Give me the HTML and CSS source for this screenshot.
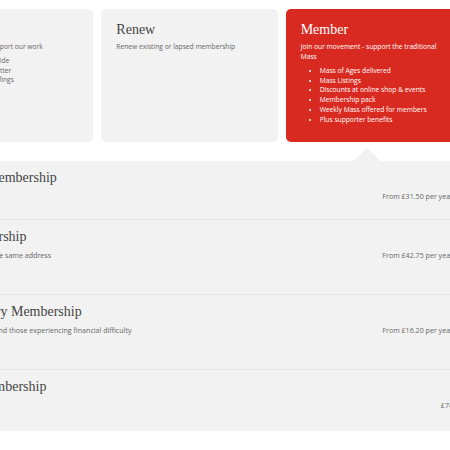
FILE: index.html
```html
<!DOCTYPE html>
<html lang="en">
<head>
<meta charset="utf-8">
<title>Membership</title>
<link rel="stylesheet" href="styles.css">
</head>
<body>
<div class="wrap">
  <div class="cards">
    <div class="card">
      <h2 class="card-title">Supporter</h2>
      <p class="card-desc">Keep informed — support our work</p>
      <ul class="card-list">
        <li>Mass listings guide</li>
        <li>Monthly newsletter</li>
        <li>Parliament briefings</li>
      </ul>
    </div>
    <div class="card">
      <h2 class="card-title">Renew</h2>
      <p class="card-desc">Renew existing or lapsed membership</p>
    </div>
    <div class="card card-active">
      <h2 class="card-title">Member</h2>
      <p class="card-desc">Join our movement - support the traditional Mass</p>
      <ul class="card-list">
        <li>Mass of Ages delivered</li>
        <li>Mass Listings</li>
        <li>Discounts at online shop &amp; events</li>
        <li>Membership pack</li>
        <li>Weekly Mass offered for members</li>
        <li>Plus supporter benefits</li>
      </ul>
      <span class="pointer"></span>
    </div>
  </div>
  <div class="panel">
    <div class="row">
      <div class="row-main">
        <h3 class="row-title">Individual Membership</h3>
      </div>
      <div class="row-price">From £31.50 per year</div>
    </div>
    <div class="row">
      <div class="row-main">
        <h3 class="row-title">Joint Membership</h3>
        <p class="row-desc">Two people living at the same address</p>
      </div>
      <div class="row-price">From £42.75 per year</div>
    </div>
    <div class="row">
      <div class="row-main">
        <h3 class="row-title">Concessionary Membership</h3>
        <p class="row-desc">For students, retired and those experiencing financial difficulty</p>
      </div>
      <div class="row-price">From £16.20 per year</div>
    </div>
    <div class="row">
      <div class="row-main">
        <h3 class="row-title">Affiliate Membership</h3>
      </div>
      <div class="row-price">£74</div>
    </div>
  </div>
</div>
</body>
</html>
```

FILE: styles.css
```css
html, body {
  margin: 0;
  padding: 0;
  overflow: hidden;
  background: #ffffff;
}

body {
  font-family: "Open Sans", "Liberation Sans", sans-serif;
  color: #666666;
}

.wrap {
  margin-left: -102px;
  width: 580px;
  padding-top: 9px;
}

.cards {
  display: grid;
  grid-template-columns: repeat(3, 1fr);
  gap: 8px;
  margin: 0 16px 19px 19px;
}

.card {
  position: relative;
  background: #f2f2f2;
  border-radius: 5px;
  padding: 11px 15px 18px;
}

.card-active {
  background: #d92a21;
  color: #ffffff;
}

.card-title {
  margin: 0;
  font-family: "Liberation Serif", "Times New Roman", serif;
  font-weight: normal;
  font-size: 14px;
  line-height: 20px;
  color: #444444;
}

.card-active .card-title {
  color: #ffffff;
}

.card-desc {
  margin: 2px 0 0;
  font-size: 6.7px;
  line-height: 10px;
}

.card-list {
  margin: 4px 0 0;
  padding-left: 19px;
  font-size: 6.7px;
  line-height: 9.7px;
}

.pointer {
  position: absolute;
  left: 67px;
  top: calc(100% + 6px);
  width: 0;
  height: 0;
  border-left: 14px solid transparent;
  border-right: 14px solid transparent;
  border-bottom: 13px solid #f2f2f2;
}

.panel {
  background: #f2f2f2;
  padding: 0 25px 3px 27px;
}

.row {
  display: flex;
  justify-content: space-between;
  align-items: flex-start;
  padding-top: 7px;
  border-bottom: 1px solid #e3e3e3;
}

.row:last-child {
  border-bottom: none;
}

.row-main {
  padding-bottom: 31px;
}

.row-title {
  margin: 0;
  font-family: "Liberation Serif", "Times New Roman", serif;
  font-weight: normal;
  font-size: 14px;
  line-height: 20px;
  color: #444444;
}

.row-desc {
  margin: 2px 0 2px;
  font-size: 7.1px;
  line-height: 12px;
}

.row-price {
  margin-top: 22px;
  font-size: 7.1px;
  line-height: 12px;
  white-space: nowrap;
}
```
